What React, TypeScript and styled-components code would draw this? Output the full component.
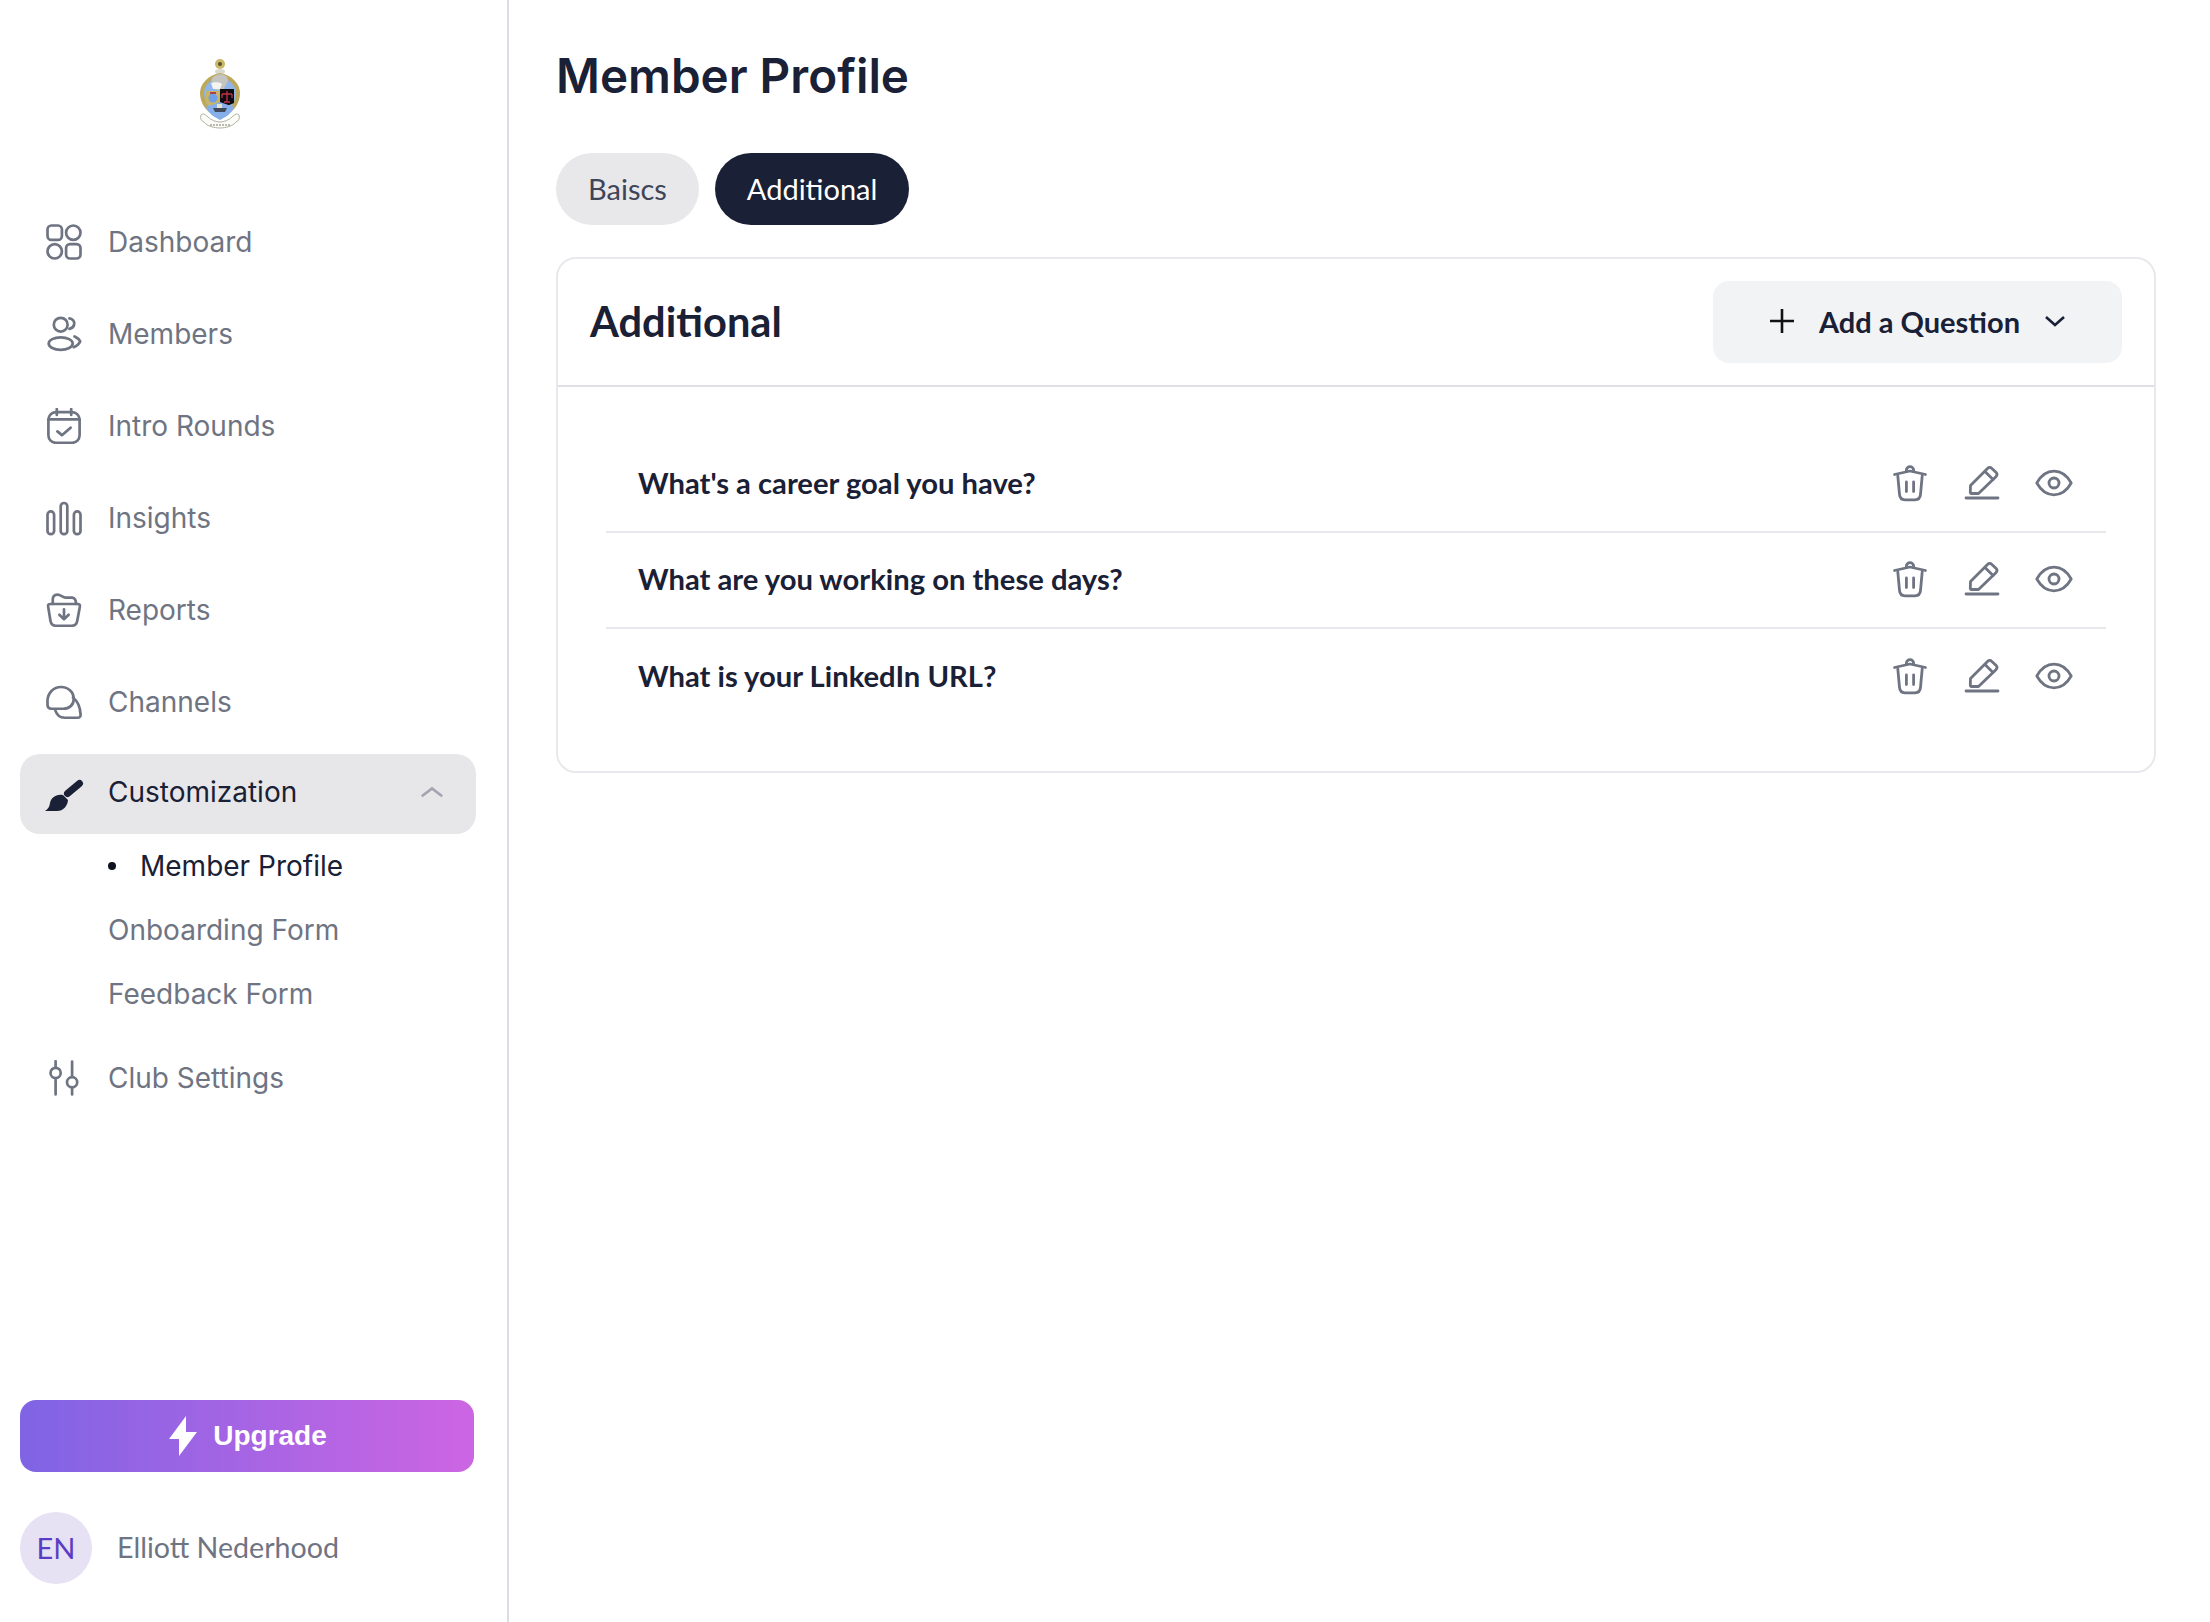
import React from "react";
import styled, { createGlobalStyle } from "styled-components";

const GlobalStyle = createGlobalStyle`
    * {
        box-sizing: border-box;
    }
    html, body {
        margin: 0;
        background: #fff;
        font-family: "Inter", "Liberation Sans", sans-serif;
    }
`;

const GREY = "#6f7482";
const DARK = "#1a2035";
const ROUND_FONT = `"Lato", "Inter", sans-serif`;

type IconProps = { children: React.ReactNode };

const Icon = ({ children }: IconProps) => (
    <IconSvg viewBox="0 0 24 24">{children}</IconSvg>
);

const DashboardIcon = () => (
    <Icon>
        <rect x="1" y="1" width="9.6" height="9.6" rx="2.6" />
        <circle cx="18.2" cy="5.8" r="4.8" />
        <circle cx="5.8" cy="18.2" r="4.8" />
        <rect x="13.4" y="13.4" width="9.6" height="9.6" rx="2.6" />
    </Icon>
);

const MembersIcon = () => (
    <Icon>
        <circle cx="9.8" cy="5.8" r="4.6" />
        <path d="M15.6 1.6c2.4.4 3.6 2.2 3.2 4-.3 1.5-1.6 2.7-3.2 3" />
        <ellipse cx="9.8" cy="18.4" rx="8" ry="4.2" />
        <path d="M19 13.6c1.9.8 3.4 2.2 3.8 3.4-.7 1.6-2.2 3-4.3 3.8" />
    </Icon>
);

const CalendarIcon = () => (
    <Icon>
        <rect x="1.6" y="2.8" width="20.8" height="20.4" rx="5" />
        <path d="M7.2.6v4M16.8.6v4M1.6 7.6h20.8M7.6 15.6l3 2.5 5.8-5" />
    </Icon>
);

const InsightsIcon = () => (
    <Icon>
        <rect x="1" y="7.6" width="4.4" height="15.2" rx="2.2" />
        <rect x="9.8" y="2" width="4.4" height="20.8" rx="2.2" />
        <rect x="18.6" y="7.6" width="4.4" height="15.2" rx="2.2" />
    </Icon>
);

const ReportsIcon = () => (
    <Icon>
        <path d="M1.400 9.600C1.100 8.500 1.900 8 3 8h18c1.100 0 1.900.5 1.600 1.600l-1.800 9.800c-.4 2.200-1.400 3.100-3.400 3.100h-11c-2 0-3-.9-3.400-3.100z" />
        <path d="M4.500 8V5c0-2 1-3.200 3-3.200 2.500 0 3.500 1.700 5.500 2h4.500c2 .2 2.500 1.700 2.500 4.200" />
        <path d="M12 11.600v6M8.900 15.200l3.100 2.900 3.100-2.900" />
    </Icon>
);

const ChannelsIcon = () => (
    <Icon>
        <path d="M1 11.500C1 6 5 2 10 2s8.500 3.500 8.500 8c0 4-3 6.500-7 6.500h-8C2 16.500 1 15.500 1 14z" />
        <path d="M6 17c1 3.500 3 5.500 6.500 5.500H21c1.500 0 2.300-1 2-2.500-.2-5-2-8.500-5-11" />
    </Icon>
);

const SettingsIcon = () => (
    <Icon>
        <circle cx="6.400" cy="8.600" r="3.400" />
        <circle cx="17.400" cy="14.800" r="3.400" />
        <path d="M6.400.8v4M6.400 13v10M17.400 1v10M17.400 19v4" />
    </Icon>
);

const BrushIcon = () => (
    <BrushSvg viewBox="8 8 40 36">
        <path d="M31.500 23.500 43.500 13.500" stroke={DARK} strokeWidth="7" strokeLinecap="round" />
        <path d="M27 25c-6.500-1.500-12 2.500-13 8-.5 4-2 6-5 8h12c6.500 0 10.500-5 11-11z" fill={DARK} />
    </BrushSvg>
);

const TrashIcon = () => (
    <ActionSvg viewBox="0 0 36 36">
        <path d="M2.500 9.500 18 6l15.500 3.500" />
        <path d="M14.400 6.600V5.200a3.600 3.600 0 0 1 7.200 0v1.400" />
        <path d="M5.800 10.800l1.700 18.600c.3 3.600 2.200 5.400 5.400 5.400h10.200c3.200 0 5.100-1.800 5.400-5.400l1.700-18.600" />
        <path d="M14.400 17v9.500M21.600 17v9.500" />
    </ActionSvg>
);

const PencilIcon = () => (
    <ActionSvg viewBox="0 0 36 36">
        <path d="M6.500 20.500 23.500 3.500c1.400-1.400 3-1.400 4.400 0l4 3.800c1.400 1.400 1.400 3 0 4.400L14.500 28.500h-7c-.8 0-1.200-.4-1.200-1.200z" />
        <path d="M21 6.500l8 8" />
        <path d="M2 33h32" />
    </ActionSvg>
);

const EyeIcon = () => (
    <ActionSvg viewBox="0 0 36 36">
        <path d="M.800 18C5 10.500 11 6.200 18 6.200S31 10.500 35.200 18C31 25.500 25 29.800 18 29.800S5 25.500.800 18z" />
        <circle cx="18" cy="18" r="5" />
    </ActionSvg>
);

const Crest = () => (
    <LogoSvg viewBox="0 0 42 72">
        <circle cx="21" cy="6" r="5" fill="#c9b76a" />
        <circle cx="21" cy="6" r="2" fill="#5a5030" />
        <ellipse cx="21" cy="13.500" rx="5" ry="2.500" fill="#d8d8cc" />
        <path d="M21 15C9 17 1 26 1 35c0 9 5 17 12 21h16c7-4 12-12 12-21 0-9-8-18-20-20z" fill="#bda85c" />
        <path d="M21 19C12 21 5 27 5 35c0 7 4 14 9 18h14c5-4 9-11 9-18 0-8-7-14-16-16z" fill="#8fb6ea" />
        <path d="M14 19c3-3 10-4 13-1 3 2 2 6 0 9l-3 5h-8c2-3 1-5-1-6-3-2-3-5-1-7z" fill="#c4c4c0" />
        <path d="M12 25c3-1 9-1 11 1l-2 5h-7z" fill="#f4f4f0" />
        <path d="M7 33h14v14l-6 4-8-6z" fill="#c8b565" />
        <circle cx="14" cy="40" r="4.500" fill="#6f9fe6" />
        <path d="M11 34h6v2h-6z" fill="#b04050" />
        <path d="M21 31h14v14l-14 6z" fill="#0c0c10" />
        <path d="M28 33v11M23 36h10M23 36v4M33 36v4M25 44h6" stroke="#c23048" strokeWidth="1.300" fill="none" />
        <path d="M21 44 35 49c-2 6-8 10-14 13-6-3-12-7-14-13z" fill="#86afea" />
        <path d="M14 50h14l-2 4H16z" fill="#3e4a5c" />
        <path d="M18 46h5v4h-5z" fill="#e8e4c8" />
        <path d="M2 57c2-2 4-1 7 2 3 3 8 5 12 5s9-2 12-5c3-3 5-4 7-2 1 3 0 6-3 7-3 4-10 6-16 6S8 68 5 64c-3-1-4-4-3-7z" fill="#fbfbf8" stroke="#a8a898" strokeWidth=".900" />
        <path d="M11 67h20" stroke="#7a7a68" strokeWidth="1.200" strokeDasharray="2 1" />
    </LogoSvg>
);

const navTop = [
    { label: "Dashboard", icon: <DashboardIcon /> },
    { label: "Members", icon: <MembersIcon /> },
    { label: "Intro Rounds", icon: <CalendarIcon /> },
    { label: "Insights", icon: <InsightsIcon /> },
    { label: "Reports", icon: <ReportsIcon /> },
    { label: "Channels", icon: <ChannelsIcon /> },
];

const questions = [
    "What's a career goal you have?",
    "What are you working on these days?",
    "What is your LinkedIn URL?",
];

const App: React.FC = () => {
    return (
        <Page>
            <GlobalStyle />
            <Sidebar>
                <LogoWrap>
                    <Crest />
                </LogoWrap>
                <Nav>
                    {navTop.map((item) => (
                        <NavItem key={item.label}>
                            {item.icon}
                            <span>{item.label}</span>
                        </NavItem>
                    ))}
                    <NavItem $active>
                        <BrushIcon />
                        <ActiveLabel>Customization</ActiveLabel>
                        <Collapse viewBox="0 0 20 10">
                            <path d="M1.500 8.500 10 2l8.500 6.500" />
                        </Collapse>
                    </NavItem>
                    <SubNav>
                        <SubItem $current>Member Profile</SubItem>
                        <SubItem>Onboarding Form</SubItem>
                        <SubItem>Feedback Form</SubItem>
                    </SubNav>
                    <NavItem>
                        <SettingsIcon />
                        <span>Club Settings</span>
                    </NavItem>
                </Nav>
                <Footer>
                    <UpgradeButton>
                        <svg width="28" height="40" viewBox="0 0 28 40">
                            <path d="M17 0 0 23h10v17l18-24H17z" fill="#fff" />
                        </svg>
                        Upgrade
                    </UpgradeButton>
                    <UserRow>
                        <Avatar>EN</Avatar>
                        <UserName>Elliott Nederhood</UserName>
                    </UserRow>
                </Footer>
            </Sidebar>
            <Main>
                <Title>Member Profile</Title>
                <Tabs>
                    <Tab>Baiscs</Tab>
                    <Tab $active>Additional</Tab>
                </Tabs>
                <Card>
                    <CardHeader>
                        <CardTitle>Additional</CardTitle>
                        <AddButton>
                            <svg width="24" height="24" viewBox="0 0 24 24">
                                <path d="M12 0v24M0 12h24" stroke="#111" strokeWidth="2.600" />
                            </svg>
                            <span>Add a Question</span>
                            <svg width="20" height="12" viewBox="0 0 20 12" fill="none">
                                <path d="M1 2l9 8 9-8" stroke={DARK} strokeWidth="2.600" />
                            </svg>
                        </AddButton>
                    </CardHeader>
                    <CardBody>
                        {questions.map((q) => (
                            <QuestionRow key={q}>
                                <QuestionText>{q}</QuestionText>
                                <Actions>
                                    <TrashIcon />
                                    <PencilIcon />
                                    <EyeIcon />
                                </Actions>
                            </QuestionRow>
                        ))}
                    </CardBody>
                </Card>
            </Main>
        </Page>
    );
};

const Page = styled.div`
    display: flex;
    min-height: 100vh;
    background: #fff;
`;

const Sidebar = styled.aside`
    width: 509px;
    flex-shrink: 0;
    display: flex;
    flex-direction: column;
    border-right: 2px solid #dcdde2;
    padding-bottom: 38px;
`;

const LogoWrap = styled.div`
    height: 202px;
    padding: 58px 0 0 199px;
`;

const LogoSvg = styled.svg`
    display: block;
    width: 42px;
    height: 72px;
`;

const Nav = styled.nav`
    display: flex;
    flex-direction: column;
    gap: 12px;
    width: 456px;
    margin-left: 20px;
`;

const IconSvg = styled.svg`
    width: 36px;
    height: 36px;
    flex-shrink: 0;
    fill: none;
    stroke: ${GREY};
    stroke-width: 1.800;
    stroke-linecap: round;
    stroke-linejoin: round;
`;

const BrushSvg = styled.svg`
    width: 40px;
    height: 36px;
    flex-shrink: 0;
    margin: 4px -2px 0;
`;

const NavItem = styled.div<{ $active?: boolean }>`
    display: flex;
    align-items: center;
    gap: 26px;
    height: 80px;
    padding: 0 26px;
    border-radius: 20px;
    font-size: 28px;
    color: ${(p) => (p.$active ? DARK : GREY)};
    background: ${(p) => (p.$active ? "#e7e7ea" : "transparent")};
`;

const ActiveLabel = styled.span`
    margin-bottom: 4px;
`;

const Collapse = styled.svg`
    width: 24px;
    height: 12px;
    margin: 0 6px 4px auto;
    fill: none;
    stroke: #a2a5af;
    stroke-width: 2.200;
`;

const SubNav = styled.div`
    display: flex;
    flex-direction: column;
    margin: -12px 0 0;
`;

const SubItem = styled.div<{ $current?: boolean }>`
    position: relative;
    display: flex;
    align-items: center;
    height: 64px;
    padding-left: ${(p) => (p.$current ? "120px" : "88px")};
    font-size: 28px;
    color: ${(p) => (p.$current ? DARK : GREY)};

    ${(p) =>
        p.$current &&
        `&::before {
            content: "";
            position: absolute;
            left: 88px;
            top: 28px;
            width: 8px;
            height: 8px;
            border-radius: 50%;
            background: #0d1120;
        }`}
`;

const Footer = styled.div`
    margin-top: auto;
    padding-left: 20px;
    display: flex;
    flex-direction: column;
    gap: 40px;
`;

const UpgradeButton = styled.div`
    display: flex;
    align-items: center;
    justify-content: center;
    gap: 16px;
    width: 454px;
    height: 72px;
    padding-left: 2px;
    border-radius: 16px;
    background: linear-gradient(90deg, #7f64e4 0%, #cd65e3 100%);
    color: #fff;
    font-family: "Liberation Sans", Arial, sans-serif;
    font-size: 28px;
    font-weight: 700;
`;

const UserRow = styled.div`
    display: flex;
    align-items: center;
    gap: 25px;
`;

const Avatar = styled.div`
    width: 72px;
    height: 72px;
    border-radius: 50%;
    display: flex;
    align-items: center;
    justify-content: center;
    padding-bottom: 2px;
    background: #e6e1f3;
    color: #5b3cc4;
    font-family: ${ROUND_FONT};
    font-size: 29px;
`;

const UserName = styled.div`
    padding-bottom: 2px;
    font-family: ${ROUND_FONT};
    font-size: 28.6px;
    color: ${GREY};
`;

const Main = styled.main`
    flex: 1;
    min-width: 0;
    padding: 46px 54px 0 47px;
`;

const Title = styled.h1`
    margin: 0;
    font-size: 47.6px;
    line-height: 60px;
    font-weight: 600;
    color: ${DARK};
`;

const Tabs = styled.div`
    display: flex;
    gap: 16px;
    margin-top: 47px;
`;

const Tab = styled.div<{ $active?: boolean }>`
    display: flex;
    align-items: center;
    height: 72px;
    padding: 0 32px 2px;
    border-radius: 36px;
    font-family: ${ROUND_FONT};
    font-size: 29px;
    color: ${(p) => (p.$active ? "#fff" : "#3f4558")};
    background: ${(p) => (p.$active ? DARK : "#e8e8ea")};
`;

const Card = styled.section`
    margin-top: 32px;
    height: 516px;
    border: 2px solid #e8e9ec;
    border-radius: 20px;
`;

const CardHeader = styled.div`
    display: flex;
    align-items: center;
    justify-content: space-between;
    height: 128px;
    padding: 0 32px;
    border-bottom: 2px solid #dfdfe6;
`;

const CardTitle = styled.h2`
    margin: 0 0 2px;
    font-family: ${ROUND_FONT};
    font-size: 41.6px;
    font-weight: 700;
    color: ${DARK};
`;

const AddButton = styled.div`
    display: flex;
    align-items: center;
    justify-content: center;
    gap: 25px;
    width: 409px;
    height: 82px;
    padding-bottom: 2px;
    border-radius: 16px;
    background: #f2f3f5;
    color: ${DARK};
    font-family: ${ROUND_FONT};
    font-size: 29px;
    font-weight: 700;
`;

const CardBody = styled.div`
    padding: 50px 48px 0;
`;

const QuestionRow = styled.div`
    display: flex;
    align-items: center;
    justify-content: space-between;
    height: 96px;
    padding: 0 34px 0 32px;

    &:not(:last-child) {
        border-bottom: 2px solid #e8e9ec;
    }
`;

const QuestionText = styled.div`
    padding-bottom: 4px;
    font-family: ${ROUND_FONT};
    font-size: 29.2px;
    font-weight: 700;
    color: ${DARK};
`;

const Actions = styled.div`
    display: flex;
    gap: 36px;
    padding-bottom: 2px;
`;

const ActionSvg = styled.svg`
    width: 36px;
    height: 36px;
    overflow: visible;
    fill: none;
    stroke: ${GREY};
    stroke-width: 2.800;
    stroke-linecap: round;
    stroke-linejoin: round;
`;

export default App;
